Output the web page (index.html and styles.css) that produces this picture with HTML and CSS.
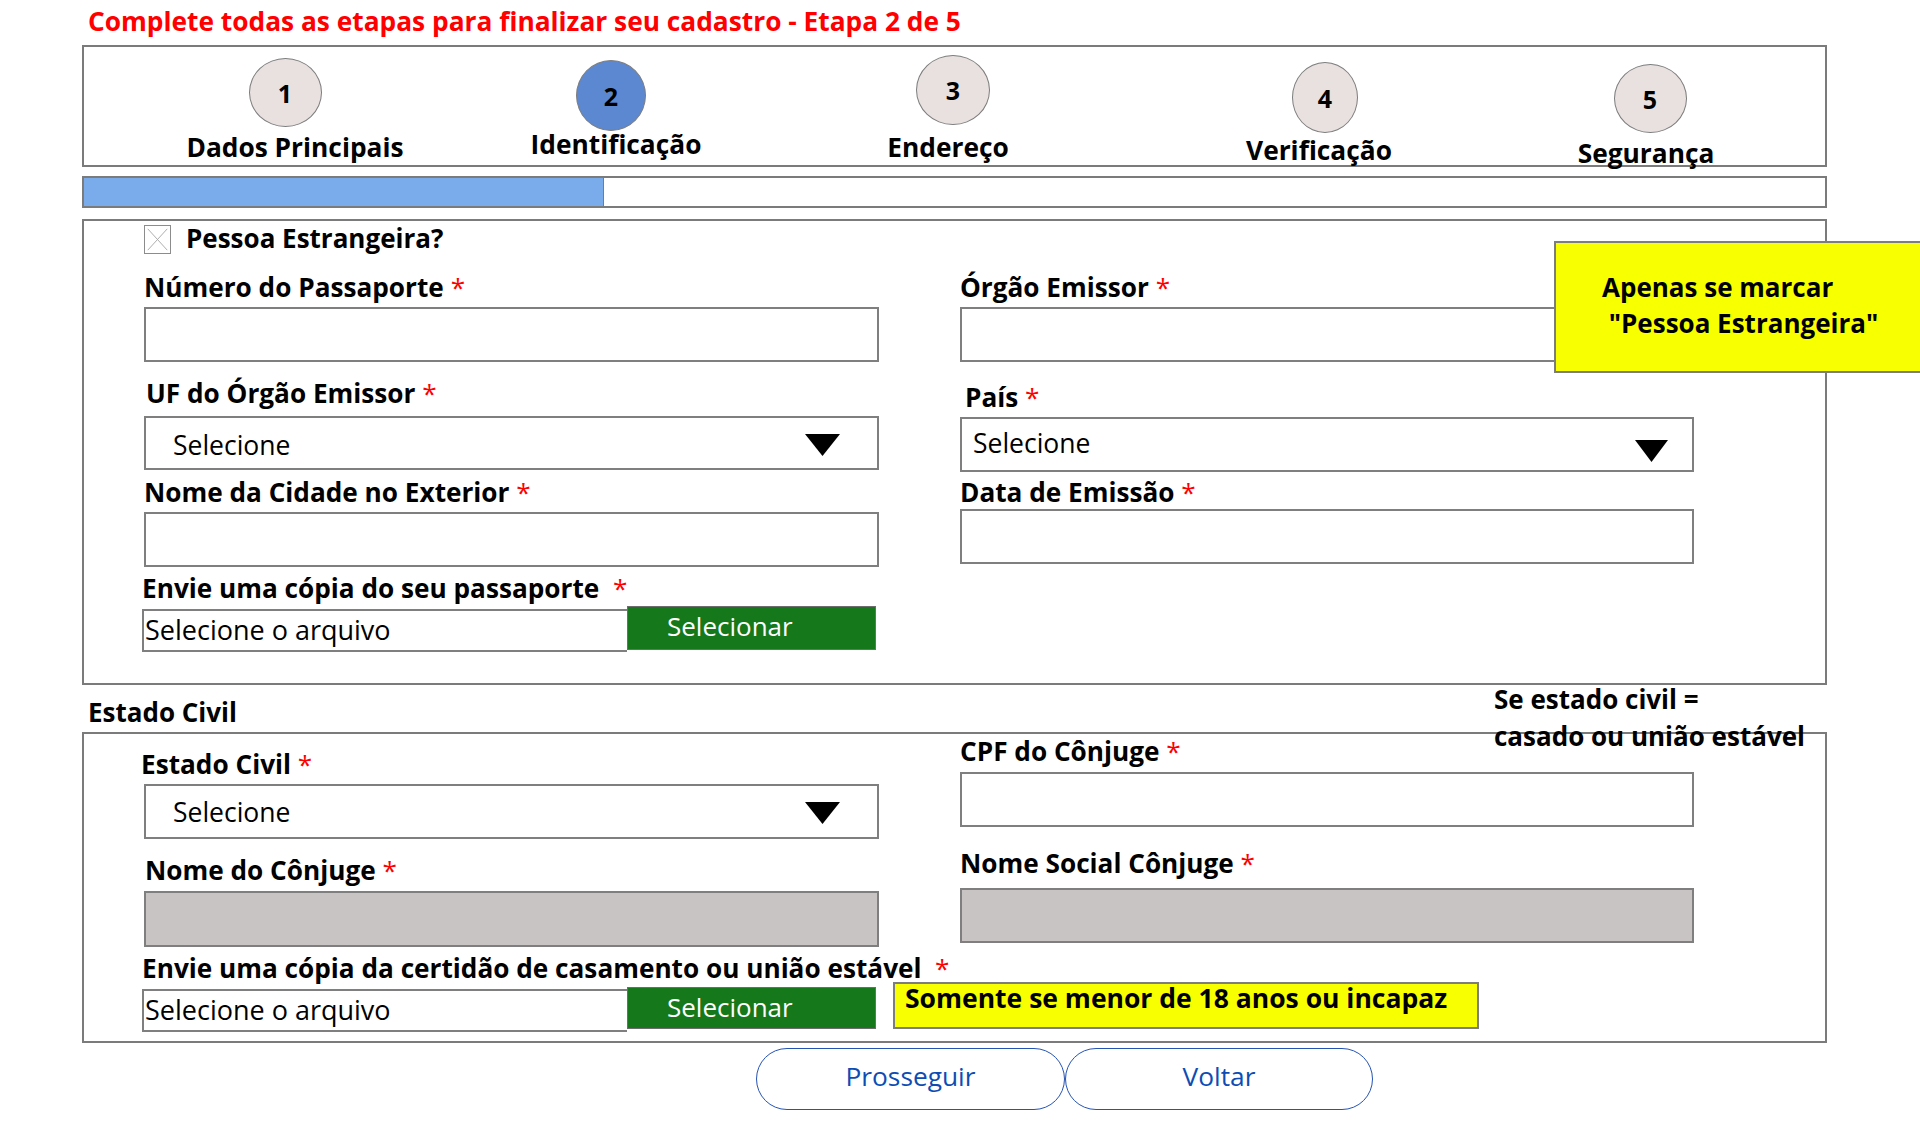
FILE: index.html
```html
<!DOCTYPE html>
<html lang="pt-BR">
<head>
<meta charset="utf-8">
<title>Cadastro - Etapa 2 de 5</title>
<link rel="stylesheet" href="styles.css">
</head>
<body>
<h1 class="title">Complete todas as etapas para finalizar seu cadastro - Etapa 2 de 5</h1>

<div class="steps">
  <div class="step step-1"><div class="circle">1</div><div class="step-label">Dados Principais</div></div>
  <div class="step step-2"><div class="circle circle-active">2</div><div class="step-label">Identificação</div></div>
  <div class="step step-3"><div class="circle">3</div><div class="step-label">Endereço</div></div>
  <div class="step step-4"><div class="circle">4</div><div class="step-label">Verificação</div></div>
  <div class="step step-5"><div class="circle">5</div><div class="step-label">Segurança</div></div>
</div>

<div class="progress"><div class="progress-fill" style="width:29.8%"></div></div>

<section class="panel panel-foreign">
  <div class="check-row">
    <span class="checkbox"><svg viewBox="0 0 27 29" width="25" height="27"><line x1="3" y1="3" x2="24" y2="26"/><line x1="24" y1="3" x2="3" y2="26"/></svg></span>
    <span class="check-text">Pessoa Estrangeira?</span>
  </div>
  <div class="cols">
    <div class="col col-left">
      <div class="label">Número do Passaporte <span class="req">*</span></div>
      <div class="input sp-3"></div>
      <div class="label label-uf sp-14">UF do Órgão Emissor <span class="req">*</span></div>
      <div class="select select-left sp-6 h54"><span class="select-text">Selecione</span><svg class="tri" viewBox="0 0 35 22" width="35" height="22"><polygon points="0,0 35,0 17.5,22"/></svg></div>
      <div class="label sp-5">Nome da Cidade no Exterior <span class="req">*</span></div>
      <div class="input sp-3"></div>
      <div class="label label-file sp-4">Envie uma cópia do seu passaporte&nbsp;&nbsp;<span class="req">*</span></div>
      <div class="file-row sp-1">
        <div class="file-input">Selecione o arquivo</div>
        <div class="btn-green">Selecionar</div>
      </div>
    </div>
    <div class="col col-right">
      <div class="label">Órgão Emissor <span class="req">*</span></div>
      <div class="input sp-3"></div>
      <div class="label label-pais sp-18">País <span class="req">*</span></div>
      <div class="select select-right sp-3"><span class="select-text">Selecione</span><svg class="tri" viewBox="0 0 33 22" width="33" height="22"><polygon points="0,0 33,0 16.5,22"/></svg></div>
      <div class="label sp-3">Data de Emissão <span class="req">*</span></div>
      <div class="input"></div>
    </div>
  </div>
</section>

<div class="note note-foreign">Apenas se marcar<br>&nbsp;"Pessoa Estrangeira"</div>

<h2 class="section-title">Estado Civil</h2>
<div class="annotation">Se estado civil =<br>casado ou união estável</div>

<section class="panel panel-civil">
  <div class="cols cols-civil">
    <div class="col col-left">
      <div class="label label-civil sp-13">Estado Civil <span class="req">*</span></div>
      <div class="select select-left sp-3"><span class="select-text select-text-civil">Selecione</span><svg class="tri" viewBox="0 0 35 22" width="35" height="22"><polygon points="0,0 35,0 17.5,22"/></svg></div>
      <div class="label label-conjuge sp-14">Nome do Cônjuge <span class="req">*</span></div>
      <div class="input input-disabled h56 sp-4"></div>
      <div class="label label-file label-tight sp-7">Envie uma cópia da certidão de casamento ou união estável&nbsp;&nbsp;<span class="req">*</span></div>
      <div class="file-row sp-5">
        <div class="file-input file-input-civil">Selecione o arquivo</div>
        <div class="btn-green btn-green-civil">Selecionar</div>
        <div class="note note-minor">Somente se menor de 18 anos ou incapaz</div>
      </div>
    </div>
    <div class="col col-right">
      <div class="label">CPF do Cônjuge <span class="req">*</span></div>
      <div class="input sp-4"></div>
      <div class="label sp-19">Nome Social Cônjuge <span class="req">*</span></div>
      <div class="input input-disabled sp-8"></div>
    </div>
  </div>
</section>

<div class="actions">
  <button class="btn-outline" type="button">Prosseguir</button>
  <button class="btn-outline btn-back" type="button">Voltar</button>
</div>
</body>
</html>
```

FILE: styles.css
```css
html, body {
  height: 1121px;
  overflow: hidden;
}
body {
  margin: 0;
  position: relative;
  background: #fff;
  color: #000;
  font-family: "Open Sans", "Segoe UI", "Noto Sans", sans-serif;
}

.title {
  margin: 4px 0 0 88px;
  font-size: 26.3px;
  line-height: 34px;
  font-weight: 700;
  color: #ff0000;
  white-space: nowrap;
}

/* stepper */
.steps {
  margin: 7px 93px 0 82px;
  height: 122px;
  box-sizing: border-box;
  border: 2px solid #7b7b7b;
  display: grid;
  grid-template-columns: 422px 220px 444px 298px 356px;
}
.step {
  display: flex;
  flex-direction: column;
  align-items: center;
  padding-top: var(--top);
}
.step-1 { --top: 11px; --w: 73px; --h: 69px; --gap: 5px; --dx: -10px; }
.step-2 { --top: 13px; --w: 70px; --h: 71px; --gap: -2px; --dx: -5px; }
.step-3 { --top: 8px;  --w: 74px; --h: 70px; --gap: 7px; --dx: 5px; }
.step-4 { --top: 15px; --w: 66px; --h: 71px; --gap: 2px; --dx: 6px; }
.step-5 { --top: 17px; --w: 73px; --h: 69px; --gap: 5px; --dx: 4px; }
.circle {
  width: var(--w);
  height: var(--h);
  margin-left: calc(2 * var(--dx));
  box-sizing: border-box;
  border: 1px solid #7d7d7d;
  border-radius: 50%;
  background: #e9e0e0;
  display: flex;
  align-items: center;
  justify-content: center;
  font-size: 25px;
  font-weight: 700;
}
.circle-active { background: #5b88d1; }
.step-label {
  margin-top: var(--gap);
  font-size: 26.3px;
  line-height: 30px;
  font-weight: 700;
  white-space: nowrap;
}

/* progress */
.progress {
  margin: 9px 93px 0 82px;
  height: 32px;
  box-sizing: border-box;
  border: 2px solid #7b7b7b;
}
.progress-fill {
  height: 100%;
  background: #7aabea;
  border-right: 1px solid #7b7b7b;
}

/* panels */
.panel {
  margin: 0 93px 0 82px;
  border: 2px solid #7b7b7b;
  padding-left: 60px;
}
.panel-foreign { margin-top: 11px; padding-bottom: 31px; }
.panel-civil { margin-top: 3px; padding-bottom: 9px; }

.check-row {
  display: flex;
  align-items: flex-start;
  gap: 15px;
}
.checkbox {
  width: 27px;
  height: 29px;
  margin-top: 4px;
  box-sizing: border-box;
  border: 1px solid #8c8c8c;
  display: block;
}
.checkbox svg { display: block; }
.checkbox line { stroke: #a8a8a8; stroke-width: 1; }
.check-text {
  font-size: 26px;
  line-height: 34px;
  font-weight: 700;
}

.cols {
  display: flex;
  gap: 81px;
  margin-top: 15px;
}
.cols-civil { margin-top: 0; }
.col { display: flex; flex-direction: column; }
.col-left { width: 735px; }
.col-right { width: 734px; }

.label {
  font-size: 26.2px;
  line-height: 34px;
  font-weight: 700;
  white-space: nowrap;
}
.label-tight { line-height: 28px; }
.label-uf { padding-left: 2px; }
.label-pais { padding-left: 5px; }
.label-civil { margin-left: -3px; }
.label-conjuge { padding-left: 1px; }
.label-file { margin-left: -2px; }
.req { color: #ff0000; font-weight: 400; }

.sp-1 { margin-top: 1px; }
.sp-2 { margin-top: 2px; }
.sp-3 { margin-top: 3px; }
.sp-4 { margin-top: 4px; }
.sp-5 { margin-top: 5px; }
.sp-6 { margin-top: 6px; }
.sp-7 { margin-top: 7px; }
.sp-8 { margin-top: 8px; }
.sp-13 { margin-top: 13px; }
.sp-14 { margin-top: 14px; }
.sp-18 { margin-top: 18px; }
.sp-19 { margin-top: 19px; }

.input {
  height: 55px;
  box-sizing: border-box;
  border: 2px solid #7f7f7f;
  background: #fff;
}
.input-disabled { background: #c8c4c3; }
.h56 { height: 56px; }

.select {
  height: 55px;
  box-sizing: border-box;
  border: 2px solid #7f7f7f;
  background: #fff;
  display: flex;
  justify-content: space-between;
  align-items: flex-start;
  font-size: 26.5px;
  line-height: 34px;
}
.select.h54 { height: 54px; }
.select-left { padding: 0 37px 0 27px; }
.select-left .select-text { margin-top: 10px; }
.select-left .select-text-civil { margin-top: 9px; }
.select-left .tri { margin-top: 16px; }
.select-right { padding: 0 24px 0 11px; }
.select-right .select-text { margin-top: 7px; }
.select-right .tri { margin-top: 21px; }
.tri { display: block; fill: #000; flex-shrink: 0; }

.file-row {
  display: flex;
  align-items: flex-start;
  margin-left: -2px;
}
.file-row > * { flex-shrink: 0; }
.file-input {
  width: 485px;
  height: 43px;
  margin-top: 3px;
  box-sizing: border-box;
  border: 2px solid #7f7f7f;
  border-right: none;
  padding: 2px 0 0 1px;
  font-size: 27px;
  line-height: 34px;
  white-space: nowrap;
}
.file-input-civil { margin-top: 2px; }
.btn-green {
  width: 249px;
  height: 44px;
  box-sizing: border-box;
  border: 1px solid #6d6d6d;
  background: #15781a;
  color: #fff;
  padding: 2px 0 0 39px;
  font-size: 26px;
  line-height: 34px;
  white-space: nowrap;
}
.btn-green-civil { height: 42px; }

/* annotations */
.note {
  background: #f7ff00;
  box-sizing: border-box;
  border: 2px solid #7d7d7d;
  font-weight: 700;
  font-size: 26px;
}
.note-foreign {
  position: absolute;
  top: 241px;
  left: 1554px;
  width: 366px;
  height: 132px;
  border-right: none;
  padding: 26px 0 0 46px;
  line-height: 36px;
  white-space: nowrap;
}
.note-minor {
  width: 586px;
  height: 47px;
  margin: -5px 0 0 17px;
  padding-left: 10px;
  font-size: 26.5px;
  line-height: 28px;
  white-space: nowrap;
}

.section-title {
  margin: 10px 0 0 88px;
  font-size: 26px;
  line-height: 34px;
  font-weight: 700;
}
.annotation {
  position: absolute;
  top: 681px;
  left: 1494px;
  font-size: 26px;
  line-height: 37px;
  font-weight: 700;
  white-space: nowrap;
}

/* actions */
.actions {
  display: flex;
  margin: 5px 0 0 756px;
}
.btn-outline {
  width: 309px;
  height: 62px;
  box-sizing: border-box;
  border: 1px solid #2553b3;
  border-radius: 31px;
  background: #fff;
  color: #0d4db3;
  font-family: inherit;
  font-size: 26.3px;
  line-height: 52px;
  padding: 1px 0 7px;
}
.btn-back { width: 308px; }
```
